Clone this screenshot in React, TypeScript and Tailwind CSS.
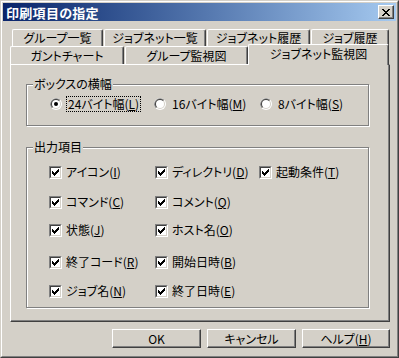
import React from 'react';

const font = "[font-family:'Noto_Sans_CJK_JP','Noto_Sans',sans-serif] [font-feature-settings:'palt']";

function Key({ k }: { k: string }) {
  return (
    <>
      (<span className="underline underline-offset-[1px]">{k}</span>)
    </>
  );
}

function CheckBox() {
  return (
    <span className="flex w-[13px] h-[13px] shrink-0 border border-t-[#808080] border-l-[#808080] border-b-white border-r-white">
      <span className="flex flex-1 items-center justify-center bg-white border border-t-[#404040] border-l-[#404040] border-b-[#D4D0C8] border-r-[#D4D0C8]">
        <svg width="7" height="7" viewBox="0 0 7 7" shapeRendering="crispEdges">
          <rect x="0" y="2" width="1" height="3" />
          <rect x="1" y="3" width="1" height="3" />
          <rect x="2" y="4" width="1" height="3" />
          <rect x="3" y="3" width="1" height="3" />
          <rect x="4" y="2" width="1" height="3" />
          <rect x="5" y="1" width="1" height="3" />
          <rect x="6" y="0" width="1" height="3" />
        </svg>
      </span>
    </span>
  );
}

function Radio({ on }: { on?: boolean }) {
  return (
    <svg width="12" height="12" viewBox="0 0 12 12" className="shrink-0">
      <circle cx="6" cy="6" r="6" fill="#ffffff" />
      <path d="M1.76 10.24 A6 6 0 0 1 10.24 1.76 L6 6 Z" fill="#808080" />
      <circle cx="6" cy="6" r="5" fill="#D4D0C8" />
      <path d="M2.46 9.54 A5 5 0 0 1 9.54 2.46 L6 6 Z" fill="#404040" />
      <circle cx="6" cy="6" r="4" fill="#ffffff" />
      {on && <circle cx="6" cy="6" r="2" fill="#000000" />}
    </svg>
  );
}

function Tab({ label, w }: { label: string; w: string }) {
  return (
    <div
      className={`${w} h-full flex items-center justify-center rounded-t-[2px] border-t border-l border-white border-r border-r-[#404040] shadow-[inset_-1px_0_0_#808080]`}
    >
      {label}
    </div>
  );
}

function Button({ children, w }: { children: React.ReactNode; w: string }) {
  return (
    <div
      className={`${w} h-[19px] flex items-center justify-center border-t border-l border-white border-b border-r border-b-[#404040] border-r-[#404040] shadow-[inset_-1px_-1px_0_#808080]`}
    >
      {children}
    </div>
  );
}

const items: { label: string; k: string; mt: string }[][] = [
  [
    { label: 'アイコン', k: 'I', mt: 'mt-[11px]' },
    { label: 'ディレクトリ', k: 'D', mt: '' },
    { label: '起動条件', k: 'T', mt: '' },
  ],
  [
    { label: 'コマンド', k: 'C', mt: 'mt-[16px]' },
    { label: 'コメント', k: 'Q', mt: '' },
  ],
  [
    { label: '状態', k: 'J', mt: 'mt-[14px]' },
    { label: 'ホスト名', k: 'O', mt: '' },
  ],
  [
    { label: '終了コード', k: 'R', mt: 'mt-[18px]' },
    { label: '開始日時', k: 'B', mt: '' },
  ],
  [
    { label: 'ジョブ名', k: 'N', mt: 'mt-[15px]' },
    { label: '終了日時', k: 'E', mt: '' },
  ],
];

export default function App() {
  return (
    <div
      className={`w-[399px] h-[358px] bg-[#D4D0C8] text-[12px] leading-none text-black ${font} border border-t-[#D4D0C8] border-l-[#D4D0C8] border-b-[#404040] border-r-[#404040]`}
    >
      <div className="h-full flex flex-col p-[1px] border border-t-white border-l-white border-b-[#808080] border-r-[#808080]">
        {/* title bar */}
        <div className="h-[18px] flex items-center pl-[3px] pr-[2px] bg-linear-to-r from-[#0A246A] to-[#A6CAF0]">
          <span className="text-white font-bold text-[13px] tracking-[0.3px]">印刷項目の指定</span>
          <div className="ml-auto w-[16px] h-[14px] flex items-center justify-center bg-[#D4D0C8] border-t border-l border-white border-b border-r border-b-[#404040] border-r-[#404040] shadow-[inset_-1px_-1px_0_#808080]">
            <svg width="8" height="7" viewBox="0 0 8 7" shapeRendering="crispEdges">
              <path d="M0 0h2v1h-2zM6 0h2v1h-2zM1 1h2v1h-2zM5 1h2v1h-2zM2 2h4v1h-4zM3 3h2v1h-2zM2 4h4v1h-4zM1 5h2v1h-2zM5 5h2v1h-2zM0 6h2v1h-2zM6 6h2v1h-2z" fill="#000" />
            </svg>
          </div>
        </div>

        {/* tabs */}
        <div className="flex flex-col pl-[7px] pt-[8px]">
          <div className="flex h-[17px] ml-[2px] gap-[1px]">
            <Tab label="グループ一覧" w="w-[91px]" />
            <Tab label="ジョブネット一覧" w="w-[102px]" />
            <Tab label="ジョブネット履歴" w="w-[103px]" />
            <Tab label="ジョブ履歴" w="w-[78px]" />
          </div>
          <div className="flex h-[18px] items-start">
            <div className="w-[114px] h-[18px] flex items-center justify-center rounded-t-[2px] border-t border-l border-white border-r border-r-[#404040] shadow-[inset_-1px_0_0_#808080]">
              ガントチャート
            </div>
            <div className="ml-[1px] w-[123px] h-[18px] flex items-center justify-center rounded-t-[2px] border-t border-l border-white border-r border-r-[#404040] shadow-[inset_-1px_0_0_#808080]">
              グループ監視図
            </div>
            <div className="relative z-10 w-[141px] h-[21px] -mt-[2px] -mb-[1px] pb-[2px] flex items-center justify-center bg-[#D4D0C8] rounded-t-[2px] border-t border-l border-white border-r border-r-[#404040] shadow-[inset_-1px_0_0_#808080]">
              ジョブネット監視図
            </div>
          </div>

          {/* panel */}
          <div className="w-[380px] h-[258px] pl-[15px] pt-[12px] border-t border-l border-white border-b border-r border-b-[#404040] border-r-[#404040] shadow-[inset_-1px_-1px_0_#808080]">
            <fieldset className="w-[343px] h-[49px] border border-[#808080] shadow-[1px_1px_0_#fff,inset_1px_1px_0_#fff]">
              <legend className="ml-[6px] px-[1px] h-[14px] leading-[14px] bg-[#D4D0C8]">ボックスの横幅</legend>
              <div className="grid grid-cols-[104px_106px_auto] pl-[23px] pt-[5px]">
                <div className="flex items-center gap-[4px] h-[16px]">
                  <Radio on />
                  <span className="h-[16px] px-[1px] flex items-center border border-dotted border-black">
                    24バイト幅<Key k="L" />
                  </span>
                </div>
                <div className="flex items-center gap-[4px] h-[16px]">
                  <Radio />
                  <span className="h-[16px] px-[1px] flex items-center border border-transparent">
                    16バイト幅<Key k="M" />
                  </span>
                </div>
                <div className="flex items-center gap-[4px] h-[16px]">
                  <Radio />
                  <span className="h-[16px] px-[1px] flex items-center border border-transparent">
                    8バイト幅<Key k="S" />
                  </span>
                </div>
              </div>
            </fieldset>

            <fieldset className="mt-[14px] w-[343px] h-[168px] border border-[#808080] shadow-[1px_1px_0_#fff,inset_1px_1px_0_#fff]">
              <legend className="ml-[6px] px-[1px] h-[14px] leading-[14px] bg-[#D4D0C8]">出力項目</legend>
              <div className="flex flex-col pl-[22px]">
                {items.map((row, i) => (
                  <div key={i} className={`grid grid-cols-[106px_104px_auto] h-[14px] ${row[0].mt}`}>
                    {row.map((it) => (
                      <div key={it.k} className="flex items-center gap-[4px]">
                        <CheckBox />
                        <span>
                          {it.label}
                          <Key k={it.k} />
                        </span>
                      </div>
                    ))}
                  </div>
                ))}
              </div>
            </fieldset>
          </div>
        </div>

        {/* buttons */}
        <div className="flex justify-end gap-[6px] pr-[6px] mt-[7px]">
          <Button w="w-[89px]">OK</Button>
          <Button w="w-[89px]">キャンセル</Button>
          <Button w="w-[88px]">
            <span>
              ヘルプ<Key k="H" />
            </span>
          </Button>
        </div>
      </div>
    </div>
  );
}
